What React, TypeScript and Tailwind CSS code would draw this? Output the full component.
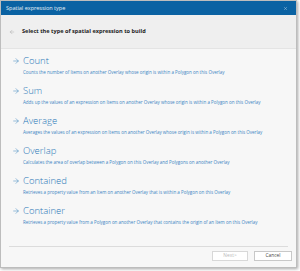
import { ArrowRight, ArrowLeft, X } from 'lucide-react';

const items = [
  { title: 'Count', desc: 'Counts the number of Items on another Overlay whose origin is within a Polygon on this Overlay' },
  { title: 'Sum', desc: 'Adds up the values of an expression on Items on another Overlay whose origin is within a Polygon on this Overlay' },
  { title: 'Average', desc: 'Averages the values of an expression on Items on another Overlay whose origin is within a Polygon on this Overlay' },
  { title: 'Overlap', desc: 'Calculates the area of overlap between a Polygon on this Overlay and Polygons on another Overlay' },
  { title: 'Contained', desc: 'Retrieves a property value from an Item on another Overlay that is within a Polygon on this Overlay' },
  { title: 'Container', desc: 'Retrieves a property value from a Polygon on another Overlay that contains the origin of an Item on this Overlay' },
];

export default function App() {
  return (
    <div className="w-[300px] h-[271px] bg-white" style={{ fontFamily: '"Open Sans", "Noto Sans", sans-serif' }}>
      <div className="w-[297px] h-[268px] flex flex-col border border-[#bdbdbd] shadow-[1px_1px_3px_rgba(0,0,0,0.35)] bg-[#f7f7f7]">
        {/* Title bar */}
        <div className="h-[14px] bg-[#0a62a3] flex items-center justify-between pl-[5px] pr-[8px]">
          <span className="text-[5.5px] text-white/90">Spatial expression type</span>
          <X className="w-[5px] h-[5px] text-white/70" strokeWidth={2} />
        </div>

        {/* Header */}
        <div className="h-[34px] bg-[#efefef] border-b border-[#e4e4e4] flex items-center pl-[8px]">
          <ArrowLeft className="w-[6px] h-[6px] text-[#9a9a9a] mr-[7px]" strokeWidth={1.5} />
          <span className="text-[5.6px] font-bold text-[#222]">Select the type of spatial expression to build</span>
        </div>

        {/* Options */}
        <div className="flex-1 flex flex-col pt-[5px] pl-[11px]">
          {items.map((item) => (
            <div key={item.title} className="h-[30px] flex flex-col">
              <div className="flex items-center h-[13px] text-[#2a78b8]">
                <ArrowRight className="w-[8px] h-[8px] mr-[3px]" strokeWidth={1.4} />
                <span className="text-[9.5px] leading-[13px] font-light">{item.title}</span>
              </div>
              <div className="pl-[11px] text-[4.5px] leading-[7px] mt-[2px] text-[#3b84c3] whitespace-nowrap">{item.desc}</div>
            </div>
          ))}
        </div>

        {/* Footer */}
        <div className="mx-[8px] border-t border-[#dcdcdc]" />
        <div className="h-[20px] flex items-start justify-end gap-[6px] pt-[4px] pr-[4px]">
          <button className="w-[36px] h-[10px] bg-white border border-[#d8d8d8] text-[4.8px] text-[#b8b8b8] flex items-center justify-center">Next&gt;</button>
          <button className="w-[38px] h-[10px] bg-white border border-[#c8c8c8] text-[4.8px] text-[#444] flex items-center justify-center">Cancel</button>
        </div>
      </div>
    </div>
  );
}
